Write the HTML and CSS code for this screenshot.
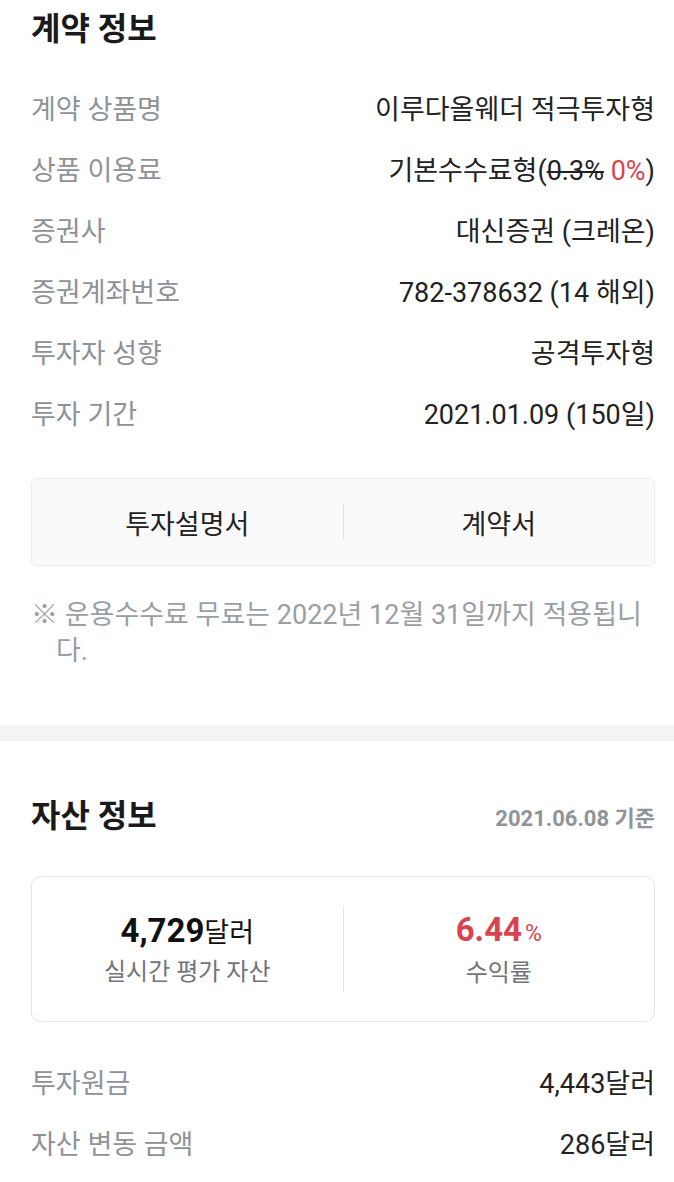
FILE: index.html
```html
<!DOCTYPE html>
<html lang="ko">
<head>
<meta charset="utf-8">
<link rel="stylesheet" href="styles.css">
</head>
<body>
<section class="section contract">
  <h2 class="title">계약 정보</h2>
  <dl class="rows">
    <div class="row"><dt>계약 상품명</dt><dd>이루다올웨더 적극투자형</dd></div>
    <div class="row"><dt>상품 이용료</dt><dd>기본수수료형(<s>0.3%</s> <span class="red">0%</span>)</dd></div>
    <div class="row"><dt>증권사</dt><dd>대신증권 (크레온)</dd></div>
    <div class="row"><dt>증권계좌번호</dt><dd>782-378632 (14 해외)</dd></div>
    <div class="row"><dt>투자자 성향</dt><dd>공격투자형</dd></div>
    <div class="row"><dt>투자 기간</dt><dd>2021.01.09 (150일)</dd></div>
  </dl>
  <div class="docs">
    <button class="doc">투자설명서</button>
    <span class="vline"></span>
    <button class="doc">계약서</button>
  </div>
  <p class="note">※ 운용수수료 무료는 2022년 12월 31일까지 적용됩니다.</p>
</section>
<div class="band"></div>
<section class="section asset">
  <div class="head">
    <h2 class="title">자산 정보</h2>
    <span class="date">2021.06.08 기준</span>
  </div>
  <div class="card">
    <div class="stat">
      <div class="big"><b>4,729</b><span class="unit">달러</span></div>
      <div class="cap">실시간 평가 자산</div>
    </div>
    <span class="vline tall"></span>
    <div class="stat">
      <div class="big red"><b>6.44</b><span class="pct">%</span></div>
      <div class="cap">수익률</div>
    </div>
  </div>
  <dl class="rows rows2">
    <div class="row"><dt>투자원금</dt><dd>4,443달러</dd></div>
    <div class="row"><dt>자산 변동 금액</dt><dd>286달러</dd></div>
  </dl>
</section>
</body>
</html>
```
FILE: styles.css
```css
* { box-sizing: border-box; }
html, body { margin: 0; padding: 0; background: #fff; }
body {
  font-family: Roboto, "Noto Sans CJK KR", sans-serif;
  color: #222;
  width: 674px;
}
.section { padding: 0 19px 0 31px; }
.title {
  margin: 0;
  font-size: 32px;
  font-weight: 700;
  line-height: 58px;
  color: #1a1a1a;
}
.rows { margin: 0; }
.contract .rows { margin-top: 19px; }
.row {
  display: flex;
  justify-content: space-between;
  align-items: center;
  height: 61px;
}
.row dt { color: #8e9298; font-size: 27px; }
.row dd { margin: 0; font-size: 27px; color: #222; }
.red { color: #d9434f; }
s { text-decoration-thickness: 2px; }
.docs {
  margin-top: 35px;
  height: 88px;
  display: flex;
  align-items: center;
  background: #fafafa;
  border: 1px solid #ececec;
  border-radius: 6px;
}
.doc {
  flex: 1;
  background: none;
  border: 0;
  font-family: inherit;
  font-size: 27px;
  color: #222;
  padding: 0;
}
.vline { width: 1px; height: 36px; background: #e3e3e3; }
.vline.tall { height: 86px; }
.note {
  margin: 31px 0 0;
  padding-left: 25px;
  text-indent: -25px;
  font-size: 27px;
  line-height: 36px;
  color: #9a9ea5;
  padding-bottom: 56px;
}
.band { height: 16px; background: #f4f4f4; }
.head {
  display: flex;
  justify-content: space-between;
  align-items: center;
  margin-top: 46px;
}
.date { font-size: 22px; font-weight: 700; color: #909399; }
.card {
  margin-top: 31px;
  height: 146px;
  display: flex;
  align-items: center;
  border: 1px solid #e4e4e4;
  border-radius: 10px;
}
.stat { flex: 1; text-align: center; }
.big { font-size: 33px; line-height: 38px; color: #111; }
.big b { font-weight: 700; }
.unit { font-size: 27px; font-weight: 400; }
.big.red { color: #d9434f; }
.pct { font-size: 23px; font-weight: 400; margin-left: 3px; }
.cap { font-size: 24px; color: #70757c; margin-top: 0; }
.rows2 { margin-top: 29px; }
```
